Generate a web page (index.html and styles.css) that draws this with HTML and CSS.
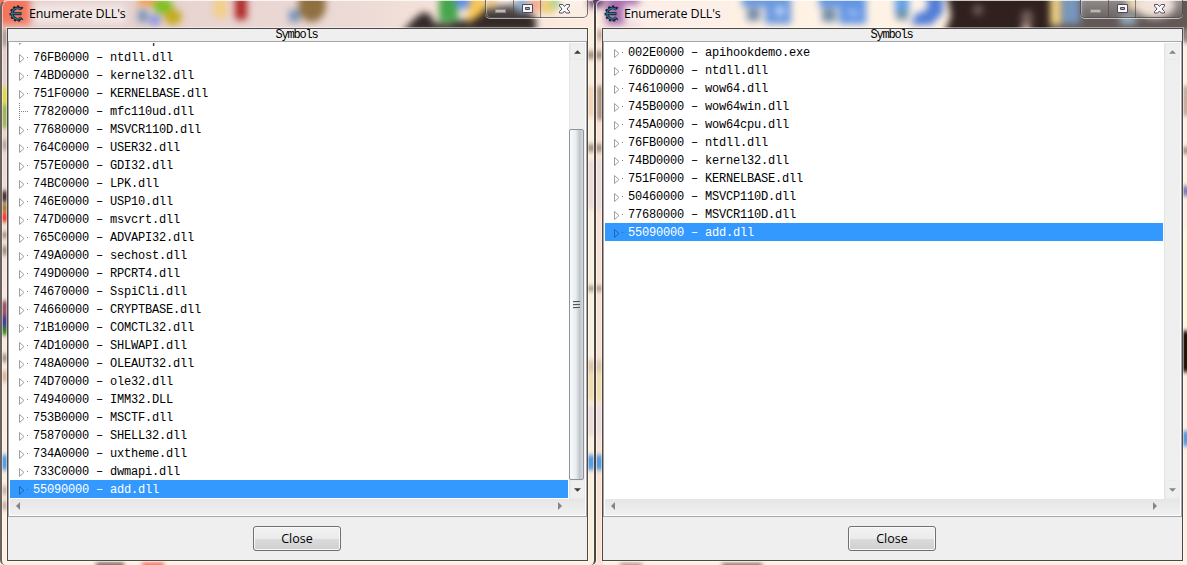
FILE: index.html
```html
<!DOCTYPE html>
<html lang="en">
<head>
<meta charset="utf-8">
<title>Enumerate DLL's</title>
<link rel="stylesheet" href="styles.css">
</head>
<body>
<svg width="0" height="0" class="defs">
  <defs>
    <symbol id="node" viewBox="0 0 12 18"><path class="tri" d="M1.500 6.500v8l4.500-4z"/><path class="dot" d="M9 9h1v1h-1z"/></symbol>
    <symbol id="leaf" viewBox="0 0 12 18"><path class="dots" d="M1.500 1v17M3 9.500h8"/></symbol>
    <symbol id="gear" viewBox="0 0 17 17">
      <path d="M13.500 4.500A5.600 5.600 0 1 0 13.500 12.700" fill="none" stroke="#14242f" stroke-width="3"/>
      <path d="M14.500 3.600A6.900 6.900 0 1 0 14.500 13.600" fill="none" stroke="#14242f" stroke-width="2.600" stroke-dasharray="1.900 1.900"/>
      <path d="M3 8.700h10.500" stroke="#14242f" stroke-width="3"/>
      <path d="M13.300 4.700A5.500 5.500 0 1 0 13.300 12.500M3 8.700h9.800" fill="none" stroke="#2b7391" stroke-width="1.300"/>
    </symbol>
    <symbol id="caption" viewBox="0 0 102 18">
      <rect x="10.500" y="9.500" width="10" height="3" fill="#bbb8b7" stroke="#8d8988"/>
      <path d="M37.500 4.500h10v8h-10z" fill="#f6f6f6" stroke="#4b4b60"/><path d="M40.500 7.500h4v2h-4z" fill="#c99a86" stroke="#4b4b60"/>
      <path d="M74.500 4.500h3.300l1.700 2 1.700-2h3.300v1.500l-2.500 3 2.500 2.500v1.500h-3.300l-1.700-2-1.700 2h-3.300V11.500l2.500-2.500-2.500-3z" fill="#f8f8f8" stroke="#51516a"/>
    </symbol>
    <symbol id="up" viewBox="0 0 8 4"><path d="M0 4l4-4 4 4z"/></symbol>
    <symbol id="down" viewBox="0 0 8 4"><path d="M0 0l4 4 4-4z"/></symbol>
    <symbol id="left" viewBox="0 0 4 8"><path d="M4 0L0 4l4 4z"/></symbol>
    <symbol id="right" viewBox="0 0 4 8"><path d="M0 0l4 4-4 4z"/></symbol>
  </defs>
</svg>

<svg class="desktop" viewBox="0 0 1187 565" width="1187" height="565">
  <defs>
    <filter id="soft" x="-10" y="-20" width="1210" height="610" filterUnits="userSpaceOnUse" color-interpolation-filters="sRGB"><feGaussianBlur stdDeviation="3.900"/></filter>
    <filter id="fine" x="-10" y="-20" width="1210" height="610" filterUnits="userSpaceOnUse" color-interpolation-filters="sRGB"><feGaussianBlur stdDeviation="2.200"/></filter>
    <linearGradient id="wall"><stop offset="0" stop-color="#e3ccca"/><stop offset=".3" stop-color="#ecdad6"/><stop offset=".42" stop-color="#fbe8dc"/><stop offset=".7" stop-color="#fff3e6"/><stop offset="1" stop-color="#fdeee0"/></linearGradient>
    <linearGradient id="edge" x2="0" y2="1"><stop offset="0" stop-color="#e2cac5"/><stop offset=".5" stop-color="#f6e6dc"/><stop offset="1" stop-color="#fff0de"/></linearGradient>
  </defs>
  <rect width="1187" height="565" fill="#fff0e2"/>
  <rect width="1187" height="32" fill="url(#wall)"/>
  <rect y="28" width="8" height="537" fill="url(#edge)"/>
  <rect x="588" y="28" width="7" height="537" fill="#faeedd"/>
  <rect x="595" y="28" width="8" height="537" fill="#f9e0d2"/>
  <g filter="url(#soft)">
    <rect x="-8" y="-8" width="38" height="33" fill="#f4745c"/>
    <rect x="34" y="4" width="92" height="20" fill="#f1e6e4"/>
    <path d="M138 -6h20v12h-20z" fill="#f5a054"/>
    <ellipse cx="163" cy="6" rx="10" ry="8" fill="#7cc022"/>
    <ellipse cx="173" cy="17" rx="9" ry="8" fill="#c4ab20"/>
    <path d="M138 10h10v12h-10z" fill="#7894b8"/><circle cx="155" cy="20" r="5.500" fill="#848fe8"/>
    <rect x="214" y="-5" width="13" height="23" rx="4" fill="#f3ce86"/>
    <rect x="235" y="-5" width="12" height="25" rx="4" fill="#b02826"/>
    <ellipse cx="312" cy="5" rx="14" ry="17" fill="#8f7040"/><path d="M289 10h11v12h-11z" fill="#7894b8"/>
    <path d="M402 32l12-13 9-7 8 3 3 8 14 1 24-6 16-12 32-2 16 14v14H402z" fill="#332a28"/>
    <path d="M439-9h19v31h-19z" fill="#46a54b"/><ellipse cx="463" cy="1" rx="8" ry="8" fill="#5f8df0"/>
    <path d="M471-9h14l-2 22-16 11z" fill="#f8c650"/>
    <rect x="486" y="-9" width="11" height="17" fill="#e6b661"/>
    <rect x="516" y="-6" width="12" height="18" fill="#6f95c0"/><rect x="529" y="-9" width="12" height="20" fill="#f28b66"/>
    <path d="M542-8h12v21h-12z" fill="#e4c650"/><path d="M552-8h7v16h-7z" fill="#84bb65"/>
    <rect x="589" y="-9" width="14" height="16" fill="#532865"/>
    <rect x="606" y="-9" width="33" height="34" fill="#a970ae"/><rect x="624" y="5" width="100" height="19" fill="#fbefeb"/>
    <path d="M742-9h49v33h-26V7h-23z" fill="#6b98df"/><path d="M747 8h13v13h-13z" fill="#768ea9"/><circle cx="780" cy="11" r="5" fill="#b8d3fa"/>
    <path d="M819-9h47v33h-27V7h-20z" fill="#6295e4"/><path d="M822 8h14v14h-14z" fill="#768ea9"/><path d="M846 14l6-5 10 7z" fill="#b5cbf3"/>
    <path d="M895-9h14v22h-14z" fill="#62a0e7"/><path d="M926-9h17v22l-12 12h-20z" fill="#527dd6"/><circle cx="919" cy="4" r="9" fill="#fff3ea"/><path d="M896 10h12v10h-12z" fill="#7091aa"/>
    <path d="M945-14h110v50H943l8-20z" fill="#30211f"/>
    <path d="M1050-14h150v54h-150z" fill="#625957"/>
    <circle cx="978" cy="10" r="5" fill="#75615c"/><ellipse cx="1027" cy="18" rx="6" ry="8" fill="#765f5b"/><circle cx="1026" cy="29" r="5" fill="#ccb0a8"/>
    <path d="M1050-9h11v34h-11z" fill="#f0cf82"/><path d="M1062-9h18v33h-18z" fill="#7897bd"/>
    <path d="M1120 16h16v8h-16z" fill="#9eb8cf"/><path d="M1127-9h9v19h-9z" fill="#e4c891"/>
    <ellipse cx="1155" cy="5" rx="20" ry="13" fill="#efdcd1"/>
  </g>
  <g filter="url(#fine)">
    <path d="M-9 30H17v16H-9z" fill="#b1a19a"/><path d="M-9 87H17v18H-9z" fill="#e1d650"/><path d="M-9 105H17v23H-9z" fill="#9fb65c"/>
    <path d="M-9 140H17v10H-9z" fill="#bda9a1"/><path d="M-9 191H17v11H-9z" fill="#4f3935"/><path d="M-9 204H17v8H-9z" fill="#a97a25"/><path d="M-9 213H17v9H-9z" fill="#f43b2c"/>
    <path d="M-9 232H17v6H-9zM-9 246H17v9H-9z" fill="#aa9181"/><path d="M-9 301H17v15H-9z" fill="#9c566a"/><path d="M-9 316H17v11H-9z" fill="#4b4092"/><path d="M-9 327H17v8H-9z" fill="#398b29"/>
    <path d="M-9 354H17v8H-9z" fill="#aa9588"/><path d="M-9 371H17v11H-9z" fill="#ddb79c"/><path d="M-9 486H17v9H-9zM-9 501H17v9H-9z" fill="#cdb7a8"/>
    <path d="M580 51h30v8h-30zM580 144h30v8h-30zM580 286h30v5h-30z" fill="#aa9482"/><path d="M597 30h12v10h-12z" fill="#c1aaa0"/>
    <path d="M580 86h15v31h-15z" fill="#f1d4b7"/><path d="M597 86h13v34h-13z" fill="#a68c7b"/>
    <path d="M580 160h30v49h-30zM580 405h30v30h-30z" fill="#ecdbd8"/><path d="M580 360h30v12h-30z" fill="#dec8ad"/><path d="M580 372h30v29h-30z" fill="#f0dcae"/>
    <path d="M1183 29h15v12h-15z" fill="#958985"/><path d="M1180 86h18v30h-18z" fill="#c9b09e"/><path d="M1180 147h18v7h-18z" fill="#a79484"/><path d="M1180 186h18v10h-18z" fill="#7c80b9"/>
    <path d="M1180 230h18v96h-18z" fill="#fff9db"/><path d="M1180 331h18v41h-18z" fill="#221407"/>
    <path d="M96 562h28v9H96zM722 563h40v9h-40z" fill="#836f65"/><path d="M142 562h22v9h-22z" fill="#f37862"/><path d="M620 563h22v9h-22z" fill="#b28f82"/>
    <path d="M-9 455H17v15H-9zM580 455h30v15h-30zM1180 431h18v15h-18z" fill="#5c9cdc"/>
  </g>
</svg>

<main class="windows">
  <section class="window first">
    <header class="titlebar"><svg class="logo"><use href="#gear"/></svg><h1>Enumerate DLL's</h1><div class="caption"><svg><use href="#caption"/></svg></div></header>
    <div class="client">
      <div class="column-head">Symbols</div>
      <div class="tree">
        <ul class="rows scrolled">
          <li><svg><use href="#node"/></svg>745A0000 – wow64cpu.dll</li>
          <li><svg><use href="#node"/></svg>76FB0000 – ntdll.dll</li>
          <li><svg><use href="#node"/></svg>74BD0000 – kernel32.dll</li>
          <li><svg><use href="#node"/></svg>751F0000 – KERNELBASE.dll</li>
          <li><svg><use href="#leaf"/></svg>77820000 – mfc110ud.dll</li>
          <li><svg><use href="#node"/></svg>77680000 – MSVCR110D.dll</li>
          <li><svg><use href="#node"/></svg>764C0000 – USER32.dll</li>
          <li><svg><use href="#node"/></svg>757E0000 – GDI32.dll</li>
          <li><svg><use href="#node"/></svg>74BC0000 – LPK.dll</li>
          <li><svg><use href="#node"/></svg>746E0000 – USP10.dll</li>
          <li><svg><use href="#node"/></svg>747D0000 – msvcrt.dll</li>
          <li><svg><use href="#node"/></svg>765C0000 – ADVAPI32.dll</li>
          <li><svg><use href="#node"/></svg>749A0000 – sechost.dll</li>
          <li><svg><use href="#node"/></svg>749D0000 – RPCRT4.dll</li>
          <li><svg><use href="#node"/></svg>74670000 – SspiCli.dll</li>
          <li><svg><use href="#node"/></svg>74660000 – CRYPTBASE.dll</li>
          <li><svg><use href="#node"/></svg>71B10000 – COMCTL32.dll</li>
          <li><svg><use href="#node"/></svg>74D10000 – SHLWAPI.dll</li>
          <li><svg><use href="#node"/></svg>748A0000 – OLEAUT32.dll</li>
          <li><svg><use href="#node"/></svg>74D70000 – ole32.dll</li>
          <li><svg><use href="#node"/></svg>74940000 – IMM32.DLL</li>
          <li><svg><use href="#node"/></svg>753B0000 – MSCTF.dll</li>
          <li><svg><use href="#node"/></svg>75870000 – SHELL32.dll</li>
          <li><svg><use href="#node"/></svg>734A0000 – uxtheme.dll</li>
          <li><svg><use href="#node"/></svg>733C0000 – dwmapi.dll</li>
          <li class="selected"><svg><use href="#node"/></svg>55090000 – add.dll</li>
        </ul>
        <div class="vscroll"><span class="arrow"><svg class="v"><use href="#up"/></svg></span><div class="thumb"><i></i><i></i><i></i></div><span class="arrow"><svg class="v"><use href="#down"/></svg></span></div>
        <div class="hscroll"><svg class="h"><use href="#left"/></svg><svg class="h"><use href="#right"/></svg></div>
      </div>
      <footer><button>Close</button></footer>
    </div>
  </section>

  <section class="window second">
    <header class="titlebar"><svg class="logo"><use href="#gear"/></svg><h1>Enumerate DLL's</h1><div class="caption"><svg><use href="#caption"/></svg></div></header>
    <div class="client">
      <div class="column-head">Symbols</div>
      <div class="tree">
        <ul class="rows">
          <li><svg><use href="#node"/></svg>002E0000 – apihookdemo.exe</li>
          <li><svg><use href="#node"/></svg>76DD0000 – ntdll.dll</li>
          <li><svg><use href="#node"/></svg>74610000 – wow64.dll</li>
          <li><svg><use href="#node"/></svg>745B0000 – wow64win.dll</li>
          <li><svg><use href="#node"/></svg>745A0000 – wow64cpu.dll</li>
          <li><svg><use href="#node"/></svg>76FB0000 – ntdll.dll</li>
          <li><svg><use href="#node"/></svg>74BD0000 – kernel32.dll</li>
          <li><svg><use href="#node"/></svg>751F0000 – KERNELBASE.dll</li>
          <li><svg><use href="#node"/></svg>50460000 – MSVCP110D.dll</li>
          <li><svg><use href="#node"/></svg>77680000 – MSVCR110D.dll</li>
          <li class="selected"><svg><use href="#node"/></svg>55090000 – add.dll</li>
        </ul>
        <div class="vscroll idle"><span class="arrow"><svg class="v"><use href="#up"/></svg></span><span class="arrow"><svg class="v"><use href="#down"/></svg></span></div>
        <div class="hscroll"><svg class="h"><use href="#left"/></svg><svg class="h"><use href="#right"/></svg></div>
      </div>
      <footer><button>Close</button></footer>
    </div>
  </section>
</main>
</body>
</html>
```
FILE: styles.css
```css
* { box-sizing: border-box; }
body { margin: 0; width: 1187px; height: 565px; overflow: hidden; position: relative; }
svg { display: block; }
.defs { position: absolute; }
.desktop { position: absolute; inset: 0; }
.windows { position: relative; display: flex; height: 565px; }
.window { flex: none; height: 565px; border-top: 1px solid rgba(255,255,255,.75); }
.first { width: 596px; border-left: 2px solid #6b6360; border-right: 2px solid #4a4542; border-radius: 7px 5px 5px 5px; padding: 0 6px 0 5px; box-shadow: inset 1px 0 rgba(255,255,255,.5), inset -1px 0 rgba(255,255,255,.5); }
.second { width: 591px; padding: 0 4px 0 6px; box-shadow: inset 1px 0 rgba(255,255,255,.6); border-radius: 5px 0 0 5px; }
.titlebar { height: 27px; display: flex; align-items: flex-start; }
.logo { width: 17px; height: 17px; margin: 4px 0 0 1px; }
h1 { margin: 4px 0 0 4px; flex: 1; font: 400 12.5px/18px "Open Sans", "Noto Sans", sans-serif; letter-spacing: -.12px; color: #000; white-space: nowrap; }
.caption { width: 103px; height: 18px; margin-top: -1px; border: 1px solid rgba(70,65,65,.75); border-top: 0; border-radius: 0 0 5px 5px; box-shadow: 0 1px rgba(255,255,255,.6), inset 1px 0 rgba(255,255,255,.3); background: linear-gradient(90deg, transparent 27px, rgba(70,65,65,.6) 27px 28px, transparent 28px 54px, rgba(70,65,65,.6) 54px 55px, transparent 55px), linear-gradient(rgba(255,255,255,.3), rgba(255,255,255,.08)); }
.caption svg { width: 102px; height: 18px; margin-left: -1px; }
.client { width: 581px; height: 533px; border: 1px solid #4d4947; background: #efefef; box-shadow: 0 0 0 1px rgba(255,255,255,.45); }
.column-head { height: 12px; padding-right: 2px; font: 12px/13px "Liberation Mono", monospace; letter-spacing: -1.2px; text-align: center; color: #000; }
.tree { height: 476px; border: 1px solid #a5a7aa; background: #fff; padding: 1px; display: grid; grid-template: 456px 16px / 559px 16px; }
.rows { margin: 0; padding: 0 1px 0 0; list-style: none; overflow: hidden; font: 12px/20px "Liberation Mono", monospace; letter-spacing: -.2px; color: #000; }
.rows li { height: 18px; display: flex; white-space: pre; --line: #a0a0a0; --fill: #fff; --dots: #808080; }
.rows svg { width: 12px; height: 18px; margin: 0 3px 0 8px; }
.scrolled li:first-child { margin-top: -13px; }
.tri { fill: var(--fill); stroke: var(--line); }
.dot { fill: var(--dots); }
.dots { fill: none; stroke: var(--dots); stroke-dasharray: 1 1; }
.rows .selected { background: #3399ff; color: #fff; --line: #1f66ad; --fill: #3399ff; --dots: #226ab0; }
.vscroll { background: #efefef; display: flex; flex-direction: column; justify-content: space-between; border-left: 1px solid #e4e4e4; }
.arrow { height: 17px; display: grid; place-items: center; border: 1px solid #eaeaea; }
.arrow:last-child { height: 19px; }
.v { width: 7px; height: 4px; fill: #3c3c3c; }
.idle .v, .h { fill: #858585; }
.thumb { width: 15px; height: 351px; margin: 67px 0 -2px -1px; border: 1px solid #8f9398; border-radius: 2px; background: linear-gradient(90deg, #fafafa, #e9edef 45%, #bec5ca 75%, #d5d9dc); display: flex; flex-direction: column; align-items: center; justify-content: center; gap: 1px; }
.thumb i { width: 7px; height: 2px; background: linear-gradient(#53575b 50%, #d5d8da 50%); }
.hscroll { background: linear-gradient(#e6e6e6, #eaeaea 40%, #f0f0f0); grid-column: 1 / 3; display: flex; justify-content: space-between; align-items: center; padding: 0 23px 2px 6px; }
.h { width: 4px; height: 8px; }
footer { display: flex; justify-content: center; padding-top: 9px; }
button { width: 88px; height: 25px; margin-right: 1px; padding: 1px 0 0; border: 1px solid #707070; border-radius: 3px; box-shadow: inset 0 0 0 1px #fafafa; background: linear-gradient(#f2f2f2, #ebebeb 50%, #dcdcdc 50%, #cfcfcf); font: 12.5px/20px "Open Sans", "Noto Sans", sans-serif; color: #000; }
```
